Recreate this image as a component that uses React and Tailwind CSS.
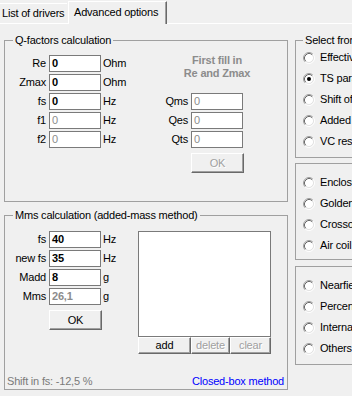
import React from "react";

const fieldTone = {
    bold: "font-bold text-black",
    gray: "text-[#8c8c8c]",
    grayBold: "font-bold text-[#8c8c8c]",
};

const Field = ({ value, tone = "gray" }) => (
    <div
        className={`h-[17px] w-[52px] shrink-0 border border-[#7a7a7a] bg-white pl-[2px] leading-[15px] ${fieldTone[tone]}`}
    >
        {value}
    </div>
);

const Row = ({ label, value, unit, tone, labelW = "w-[44px]" }) => (
    <div className="flex h-[17px] items-center">
        <span className={`${labelW} shrink-0 pr-[3px] text-right leading-[17px] whitespace-nowrap`}>
            {label}
        </span>
        <Field value={value} tone={tone} />
        {unit && <span className="ml-[2px]">{unit}</span>}
    </div>
);

const btnBase =
    "flex items-center justify-center border border-t-white border-l-white border-r-[#696969] border-b-[#696969] bg-[#f0f0f0] shadow-[inset_-1px_-1px_0_#a0a0a0]";
const disabledText = "text-[#a0a0a0] [text-shadow:1px_1px_0_#fff]";

const Radio = ({ checked }) => (
    <svg width="12" height="12" viewBox="0 0 12 12" className="shrink-0">
        <circle cx="6" cy="6" r="4" fill="#fff" />
        <path d="M2.11 9.89A5.5 5.5 0 0 1 9.89 2.11" fill="none" stroke="#a0a0a0" />
        <path d="M9.89 2.11A5.5 5.5 0 0 1 2.11 9.89" fill="none" stroke="#fff" />
        <path d="M2.82 9.18A4.5 4.5 0 0 1 9.18 2.82" fill="none" stroke="#696969" />
        <path d="M9.18 2.82A4.5 4.5 0 0 1 2.82 9.18" fill="none" stroke="#e3e3e3" />
        {checked && <circle cx="6" cy="6" r="2" fill="#000" />}
    </svg>
);

const RadioRow = ({ label, checked }) => (
    <div className="flex h-[21px] items-center pl-[7px] whitespace-nowrap">
        <Radio checked={checked} />
        <span className="ml-[5px]">{label}</span>
    </div>
);

const App = () => {
    return (
        <div className="h-[396px] w-[352px] overflow-hidden bg-[#f0f0f0] font-['Liberation_Sans',Arial,sans-serif] text-[11px] leading-[13px] tracking-[-0.2px] text-black">
            {/* Tabs */}
            <div className="flex h-[24px] items-end border-b border-white">
                <div className="h-[20px] w-[67px] border-t border-white pl-[2px] leading-[19px] whitespace-nowrap">
                    List of drivers
                </div>
                <div className="relative z-10 -mb-px ml-[1px] h-[23px] w-[99px] border-t border-r border-l border-t-white border-l-white border-r-[#696969] bg-[#f0f0f0] pt-[4px] pl-[5px] shadow-[inset_-1px_0_0_#a0a0a0] whitespace-nowrap">
                    Advanced options
                </div>
            </div>

            <div className="flex gap-[7px] pt-[10px] pl-[4px]">
                {/* Left column */}
                <div className="flex w-[284px] shrink-0 flex-col gap-[7px]">
                    <fieldset className="border border-[#a0a0a0]">
                        <legend className="ml-[8px] px-[2px] leading-[13px]">
                            Q-factors calculation
                        </legend>
                        <div className="flex h-[154px] pt-[8px]">
                            <div className="flex w-[155px] shrink-0 flex-col gap-[2px]">
                                <Row label="Re" value="0" unit="Ohm" tone="bold" />
                                <Row label="Zmax" value="0" unit="Ohm" tone="bold" />
                                <Row label="fs" value="0" unit="Hz" tone="bold" />
                                <Row label="f1" value="0" unit="Hz" />
                                <Row label="f2" value="0" unit="Hz" />
                            </div>
                            <div className="flex flex-col">
                                <div className="-mt-px ml-[7px] w-[100px] text-center font-bold text-[#8c8c8c]">
                                    First fill in
                                    <br />
                                    Re and Zmax
                                </div>
                                <div className="mt-[13px] flex flex-col gap-[2px]">
                                    <Row label="Qms" value="0" labelW="w-[31px]" />
                                    <Row label="Qes" value="0" labelW="w-[31px]" />
                                    <Row label="Qts" value="0" labelW="w-[31px]" />
                                </div>
                                <button
                                    type="button"
                                    className={`mt-[5px] ml-[31px] h-[20px] w-[53px] ${btnBase} ${disabledText}`}
                                >
                                    OK
                                </button>
                            </div>
                        </div>
                    </fieldset>

                    <fieldset className="border border-[#a0a0a0]">
                        <legend className="ml-[8px] px-[2px] leading-[13px]">
                            Mms calculation (added-mass method)
                        </legend>
                        <div className="flex h-[167px] flex-col pt-[9px]">
                            <div className="flex">
                                <div className="flex w-[133px] shrink-0 flex-col">
                                    <div className="flex flex-col gap-[2px]">
                                        <Row label="fs" value="40" unit="Hz" tone="bold" />
                                        <Row label="new fs" value="35" unit="Hz" tone="bold" />
                                        <Row label="Madd" value="8" unit="g" tone="bold" />
                                        <Row label="Mms" value="26,1" unit="g" tone="grayBold" />
                                    </div>
                                    <button
                                        type="button"
                                        className={`mt-[5px] ml-[44px] h-[20px] w-[53px] ${btnBase}`}
                                    >
                                        OK
                                    </button>
                                </div>
                                <div className="flex w-[133px] flex-col">
                                    <div className="h-[106px] border border-[#7a7a7a] bg-white" />
                                    <div className="flex h-[17px]">
                                        <button type="button" className={`w-[53px] ${btnBase}`}>
                                            add
                                        </button>
                                        <button
                                            type="button"
                                            className={`w-[39px] ${btnBase} ${disabledText}`}
                                        >
                                            delete
                                        </button>
                                        <button
                                            type="button"
                                            className={`w-[41px] ${btnBase} ${disabledText}`}
                                        >
                                            clear
                                        </button>
                                    </div>
                                </div>
                            </div>
                            <div className="mt-auto flex justify-between pr-[3px] pb-[1px] pl-[2px]">
                                <span className="text-[#7a7a7a]">Shift in fs: -12,5 %</span>
                                <span className="text-[#0000ff]">Closed-box method</span>
                            </div>
                        </div>
                    </fieldset>
                </div>

                {/* Right column */}
                <div className="flex w-[90px] shrink-0 flex-col">
                    <fieldset className="border border-[#a0a0a0]">
                        <legend className="ml-[7px] px-[2px] leading-[13px] whitespace-nowrap">
                            Select from
                        </legend>
                        <div className="h-[110px]">
                            <RadioRow label="Effective area" />
                            <RadioRow label="TS parameters" checked />
                            <RadioRow label="Shift of fs" />
                            <RadioRow label="Added mass" />
                            <RadioRow label="VC resistance" />
                        </div>
                    </fieldset>
                    <div className="mt-[5px] h-[97px] border border-[#a0a0a0] pt-[8px]">
                        <RadioRow label="Enclosure" />
                        <RadioRow label="Golden ratio" />
                        <RadioRow label="Crossover" />
                        <RadioRow label="Air coil" />
                    </div>
                    <div className="mt-[6px] h-[99px] border border-[#a0a0a0] pt-[8px]">
                        <RadioRow label="Nearfield" />
                        <RadioRow label="Percentage" />
                        <RadioRow label="Internal" />
                        <RadioRow label="Others" />
                    </div>
                </div>
            </div>
        </div>
    );
};

export default App;
